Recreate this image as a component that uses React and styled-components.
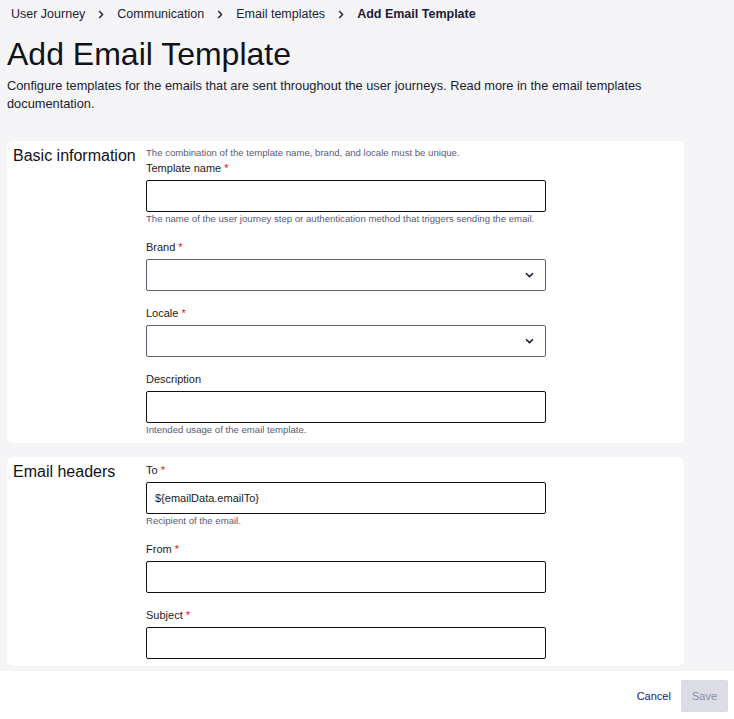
import React from "react";
import styled, { createGlobalStyle } from "styled-components";

const GlobalStyle = createGlobalStyle`
  html, body {
    margin: 0;
    padding: 0;
    background: #f5f5f7;
    font-family: "Liberation Sans", Arial, sans-serif;
    color: #1b1b2f;
  }
  * { box-sizing: border-box; }
`;

const Page = styled.div`
  min-height: 100vh;
  display: flex;
  flex-direction: column;
`;

const Main = styled.div`
  flex: 1;
  padding: 0 7px 5px;
`;

const Crumbs = styled.nav`
  display: flex;
  align-items: center;
  padding: 5px 4px 0;
  font-size: 12.5px;
  line-height: 18px;
`;

const Crumb = styled.span`
  color: #1b1b33;
  font-weight: ${(p) => (p.$current ? 700 : 400)};
`;

const Sep = styled.svg`
  margin: 0 13px 0 13px;
  flex: none;
`;

const Title = styled.h1`
  margin: 12px 0 4px;
  font-size: 32px;
  line-height: 38px;
  font-weight: 400;
  color: #111118;
`;

const Intro = styled.p`
  margin: 0 0 28px;
  font-size: 12.8px;
  line-height: 18px;
  color: #1b1b2f;
`;

const Cards = styled.div`
  display: flex;
  flex-direction: column;
  gap: 14px;
  width: 677px;
`;

const Card = styled.section`
  display: flex;
  background: #fff;
  border-radius: 6px;
  padding: 6px 6px 7px;
`;

const CardTitle = styled.h2`
  width: 133px;
  flex: none;
  margin: 0;
  font-size: 16px;
  line-height: 18px;
  font-weight: 400;
  color: #111118;
`;

const Fields = styled.div`
  width: 400px;
  display: flex;
  flex-direction: column;
`;

const Hint = styled.div`
  font-size: 9.6px;
  line-height: 12px;
  color: #5a5a78;
  margin-bottom: 2px;
`;

const Field = styled.div`
  display: flex;
  flex-direction: column;
  & + & {
    margin-top: 15px;
  }
`;

const Label = styled.label`
  font-size: 11px;
  line-height: 14px;
  color: #1a1a24;
  margin-bottom: 5px;
`;

const Req = styled.span`
  color: #d42020;
  margin-left: 3px;
`;

const Input = styled.input`
  height: 32px;
  width: 100%;
  border: 1px solid #111;
  border-radius: 2px;
  padding: 0 8px;
  font-family: inherit;
  font-size: 11px;
  color: #1a1a24;
  background: #fff;
  outline: none;
`;

const SelectBox = styled.div`
  height: 32px;
  display: flex;
  align-items: center;
  justify-content: flex-end;
  border: 1px solid #5e5e7e;
  border-radius: 2px;
  padding: 0 11px;
  background: #fff;
`;

const Help = styled.div`
  margin-top: 1px;
  font-size: 9.6px;
  line-height: 12px;
  color: #5a5a78;
`;

const Footer = styled.footer`
  background: #fff;
  display: flex;
  justify-content: flex-end;
  align-items: center;
  gap: 10px;
  padding: 9px 6px 8px;
`;

const TextButton = styled.button`
  border: none;
  background: none;
  padding: 0;
  font-family: inherit;
  font-size: 11px;
  color: #17178a;
  cursor: pointer;
`;

const SaveButton = styled.button`
  height: 32px;
  padding: 0 11px;
  border: none;
  border-radius: 2px;
  background: #dcdce5;
  color: #8d8da6;
  font-family: inherit;
  font-size: 11px;
`;

const Chevron = () => (
  <svg width="9" height="6" viewBox="0 0 9 6" fill="none">
    <path d="M1 1.2L4.5 4.6L8 1.2" stroke="#1b1b40" strokeWidth="1.6" />
  </svg>
);

const CrumbSep = () => (
  <Sep width="6" height="9" viewBox="0 0 6 9" fill="none">
    <path d="M1.2 1L4.6 4.5L1.2 8" stroke="#1b1b33" strokeWidth="1.4" />
  </Sep>
);

const TextField = ({ label, required, help, value }) => (
  <Field>
    <Label>
      {label}
      {required && <Req>*</Req>}
    </Label>
    <Input defaultValue={value} />
    {help && <Help>{help}</Help>}
  </Field>
);

const SelectField = ({ label, required }) => (
  <Field>
    <Label>
      {label}
      {required && <Req>*</Req>}
    </Label>
    <SelectBox>
      <Chevron />
    </SelectBox>
  </Field>
);

export default function App() {
  return (
    <Page>
      <GlobalStyle />
      <Main>
        <Crumbs>
          <Crumb>User Journey</Crumb>
          <CrumbSep />
          <Crumb>Communication</Crumb>
          <CrumbSep />
          <Crumb>Email templates</Crumb>
          <CrumbSep />
          <Crumb $current>Add Email Template</Crumb>
        </Crumbs>
        <Title>Add Email Template</Title>
        <Intro>
          Configure templates for the emails that are sent throughout the user
          journeys. Read more in the email templates documentation.
        </Intro>
        <Cards>
          <Card>
            <CardTitle>Basic information</CardTitle>
            <Fields>
              <Hint>
                The combination of the template name, brand, and locale must be
                unique.
              </Hint>
              <TextField
                label="Template name"
                required
                help="The name of the user journey step or authentication method that triggers sending the email."
              />
              <SelectField label="Brand" required />
              <SelectField label="Locale" required />
              <TextField
                label="Description"
                help="Intended usage of the email template."
              />
            </Fields>
          </Card>
          <Card>
            <CardTitle>Email headers</CardTitle>
            <Fields>
              <TextField
                label="To"
                required
                value="${emailData.emailTo}"
                help="Recipient of the email."
              />
              <TextField label="From" required />
              <TextField label="Subject" required />
            </Fields>
          </Card>
        </Cards>
      </Main>
      <Footer>
        <TextButton>Cancel</TextButton>
        <SaveButton disabled>Save</SaveButton>
      </Footer>
    </Page>
  );
}
